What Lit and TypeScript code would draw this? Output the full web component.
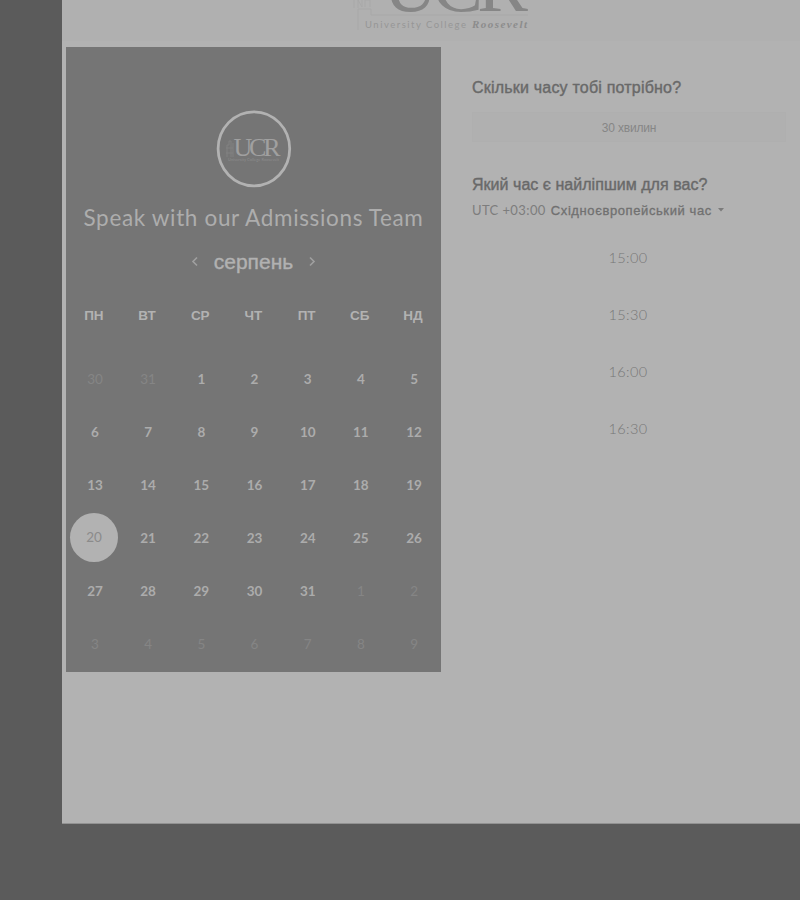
import { LitElement, html, css } from "lit";
import { customElement } from "lit/decorators.js";
import { classMap } from "lit/directives/class-map.js";

const WEEKDAYS = ["ПН", "ВТ", "СР", "ЧТ", "ПТ", "СБ", "НД"];
const SELECTED = 22;
const DAYS = [30, 31, ...Array.from({ length: 31 }, (_, i) => i + 1), ...Array.from({ length: 9 }, (_, i) => i + 1)];
const TIMES = ["15:00", "15:30", "16:00", "16:30"];

@customElement("booking-calendar")
class BookingCalendar extends LitElement {
  static styles = css`
    :host { display: flex; flex-direction: column; align-items: center; box-sizing: border-box; width: 375px; height: 625px; padding-top: 63px; background: #757575; color: #b2b2b2; }
    .badge { width: 76px; height: 78px; display: block; }
    .title { margin-top: 13px; height: 34px; font: 400 22.5px/34px Lato, sans-serif; letter-spacing: 0.65px; white-space: nowrap; color: #adadad; }
    .month { display: flex; align-items: center; justify-content: space-between; width: 125px; height: 28px; margin-top: 13px; }
    .name { font: 400 21px/28px "Liberation Sans", sans-serif; -webkit-text-stroke: 0.4px #b0b0b0; }
    .arrow { width: 8px; height: 12px; fill: none; stroke: #a0a0a0; stroke-width: 1.6; }
    .grid { display: grid; grid-template-columns: repeat(7, 53.2px); width: 372.4px; justify-items: center; }
    .week { margin-top: 28px; height: 24px; font: 700 13.5px/24px "Liberation Sans", sans-serif; }
    .days { margin-top: 24px; grid-auto-rows: 53px; align-items: center; font: 700 13.5px/20px Lato, sans-serif; letter-spacing: -0.1px; color: #acacac; }
    .day { display: flex; align-items: center; justify-content: center; width: 48px; height: 49px; padding: 1px 0 0 2px; box-sizing: border-box; }
    .muted { color: #858585; font-weight: 400; }
    .picked { background: #b2b2b2; color: #8b8b8b; border-radius: 50%; font-weight: 400; padding: 0 0 2px; }
  `;
  render() {
    return html`
      <svg class="badge" viewBox="0 0 76 78">
        <ellipse cx="37.9" cy="38.8" rx="35.8" ry="37" fill="none" stroke="#b2b2b2" stroke-width="2.8" />
        <path d="M11 47V35h2v-4h2v16M17 47V33M10 38h7M10 43h7" fill="none" stroke="#828282" stroke-width="1" />
        <text x="17.5" y="45.5" font-family="Liberation Serif, serif" font-size="26" textLength="47" fill="#a0a0a0">UCR</text>
        <text x="12" y="50.5" font-family="Lato, sans-serif" font-size="4" textLength="51" fill="#8d8d8d">University College Roosevelt</text>
      </svg>
      <div class="title">Speak with our Admissions Team</div>
      <div class="month">
        <svg class="arrow" viewBox="0 0 8 12"><path d="M6 1.5 2 5.5l4 4" /></svg>
        <span class="name">серпень</span>
        <svg class="arrow" viewBox="0 0 8 12"><path d="m2 1.5 4 4-4 4" /></svg>
      </div>
      <div class="grid week">${WEEKDAYS.map((d) => html`<span>${d}</span>`)}</div>
      <div class="grid days">
        ${DAYS.map((d, i) => html`<span class=${classMap({ day: true, muted: i < 2 || i > 32, picked: i === SELECTED - 1 })}>${d}</span>`)}
      </div>
    `;
  }
}

@customElement("time-picker")
class TimePicker extends LitElement {
  static styles = css`
    :host { display: block; width: 314px; padding-top: 29px; color: #696969; font-family: "Liberation Sans", sans-serif; }
    .heading { font-size: 16px; line-height: 24px; font-weight: 400; margin: 0; white-space: nowrap; letter-spacing: 0.2px; -webkit-text-stroke: 0.4px #696969; }
    .length { height: 30px; margin-top: 12px; background: #b0b0b0; border: 1px solid #afafaf; box-sizing: border-box; text-align: center; font-size: 12px; letter-spacing: -0.2px; line-height: 31px; color: #868686; }
    .second { margin-top: 31px; letter-spacing: 0.03px; }
    .zone { display: flex; align-items: center; height: 20px; margin-top: 3px; font-size: 13px; color: #707070; white-space: nowrap; -webkit-text-stroke: 0.3px #707070; letter-spacing: 0.6px; }
    .utc { font-family: Lato, sans-serif; font-size: 13px; letter-spacing: 0.4px; color: #7d7d7d; margin-right: 5px; -webkit-text-stroke: 0; }
    .caret { width: 6px; height: 4px; margin-left: 6px; fill: #7b7b7b; }
    .times { margin-top: 9px; }
    .time { height: 57px; line-height: 57px; padding-right: 2px; text-align: center; font-family: Lato, sans-serif; font-size: 14.5px; font-weight: 300; letter-spacing: 0.4px; color: #777; }
  `;
  render() {
    return html`
      <h2 class="heading">Скільки часу тобі потрібно?</h2>
      <div class="length">30 хвилин</div>
      <h2 class="heading second">Який час є найліпшим для вас?</h2>
      <div class="zone"><span class="utc">UTC +03:00</span><span>Східноєвропейський час</span><svg class="caret" viewBox="0 0 6 4"><path d="M0 0h6L3 3.5z" /></svg></div>
      <div class="times">${TIMES.map((t) => html`<div class="time">${t}</div>`)}</div>
    `;
  }
}

@customElement("app-root")
class AppRoot extends LitElement {
  static styles = css`
    :host { display: block; box-sizing: border-box; width: 800px; height: 900px; padding-left: 62px; background: #5b5b5b; overflow: hidden; }
    .page { height: 824px; background: #b2b2b2; box-sizing: border-box; border-bottom: 1px solid #929292; }
    .header { height: 41px; overflow: hidden; background: #b0b0b0; }
    .logo { display: block; width: 190px; height: 41px; margin-left: 288px; }
    .content { display: flex; padding: 6px 0 0 4px; gap: 31px; }
  `;
  render() {
    return html`
      <main class="page">
        <header class="header">
          <svg class="logo" viewBox="350 0 190 41">
            <path d="M354 8V0M358 8V0l4 7V0M365 7V0h5v7M358 30V9h13v6h157" fill="none" stroke="#a8a8a8" stroke-width="1" />
            <text x="383" y="11" font-family="Liberation Serif, serif" font-size="76" textLength="145" fill="#868686">UCR</text>
            <text x="365" y="28" font-family="Lato, sans-serif" font-size="9.5" textLength="101" fill="#969696">University College</text>
            <text x="472" y="28" font-family="Liberation Serif, serif" font-size="11" font-style="italic" font-weight="700" textLength="55" fill="#8c8c8c">Roosevelt</text>
          </svg>
        </header>
        <div class="content">
          <booking-calendar></booking-calendar>
          <time-picker></time-picker>
        </div>
      </main>
    `;
  }
}
